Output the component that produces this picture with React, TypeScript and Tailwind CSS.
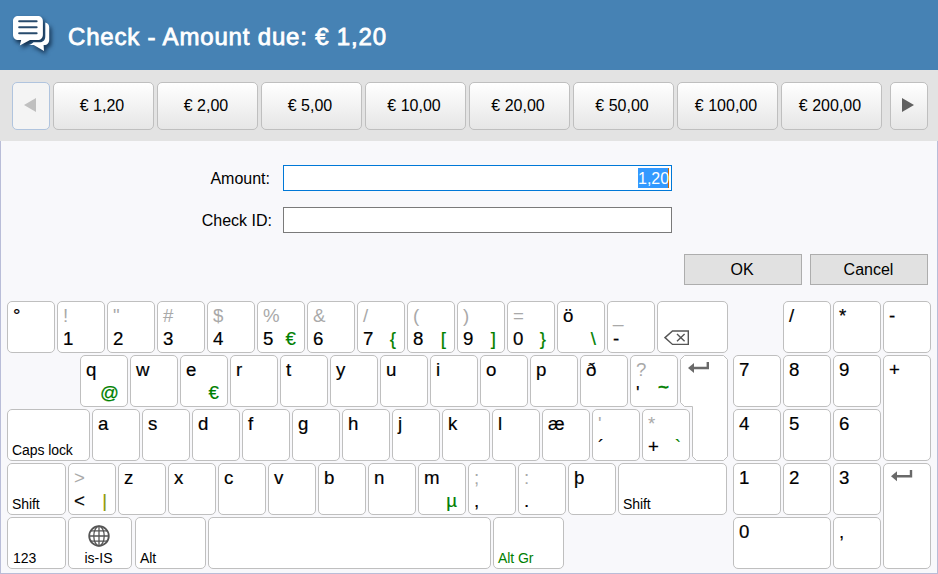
import React from "react";

type KeyProps = {
  top?: string;
  muted?: boolean;
  bottom?: string;
  alt?: string;
  altClass?: string;
  label?: string;
  green?: boolean;
  className?: string;
  children?: React.ReactNode;
};

const keyBase =
  "relative box-border shrink-0 rounded-[5px] border border-[#bfbfbf] bg-white";

function Key({
  top,
  muted,
  bottom,
  alt,
  altClass = "text-[#008000]",
  label,
  green,
  className = "w-12 h-[52px]",
  children,
}: KeyProps) {
  return (
    <div className={`${keyBase} flex flex-col ${className}`}>
      {children}
      {label !== undefined ? (
        <div
          className={`mt-auto pb-[1px] pl-1 text-[14px] leading-4 tracking-[-0.08px] ${green ? "text-[#008000]" : "text-black"}`}
        >
          {label}
        </div>
      ) : (
        <div className="pt-0.5 pl-[5px] pr-2 text-[18.67px] leading-[23px]">
          <div
            className={`h-[23px] ${muted ? "text-[#a9a9a9]" : "text-black [-webkit-text-stroke:0.2px_currentColor]"}`}
          >
            {top}
          </div>
          <div className="flex h-[23px] justify-between [-webkit-text-stroke:0.2px_currentColor]">
            <span>{bottom}</span>
            <span className={altClass}>{alt}</span>
          </div>
        </div>
      )}
    </div>
  );
}

const numberRow: KeyProps[] = [
  { top: "°" },
  { top: "!", muted: true, bottom: "1" },
  { top: '"', muted: true, bottom: "2" },
  { top: "#", muted: true, bottom: "3" },
  { top: "$", muted: true, bottom: "4" },
  { top: "%", muted: true, bottom: "5", alt: "€" },
  { top: "&", muted: true, bottom: "6" },
  { top: "/", muted: true, bottom: "7", alt: "{" },
  { top: "(", muted: true, bottom: "8", alt: "[" },
  { top: ")", muted: true, bottom: "9", alt: "]" },
  { top: "=", muted: true, bottom: "0", alt: "}" },
  { top: "ö", alt: "\\" },
  { top: "_", muted: true, bottom: "-" },
];

const upperRow: KeyProps[] = [
  { top: "q", alt: "@" },
  { top: "w" },
  { top: "e", alt: "€" },
  { top: "r" },
  { top: "t" },
  { top: "y" },
  { top: "u" },
  { top: "i" },
  { top: "o" },
  { top: "p" },
  { top: "ð" },
  { top: "?", muted: true, bottom: "'", alt: "~", altClass: "-mt-[6px] text-[#008000] [-webkit-text-stroke:0.6px_#008000]" },
];

const homeRow: KeyProps[] = [
  { top: "a" },
  { top: "s" },
  { top: "d" },
  { top: "f" },
  { top: "g" },
  { top: "h" },
  { top: "j" },
  { top: "k" },
  { top: "l" },
  { top: "æ" },
  { top: "'", muted: true, bottom: "´" },
  { top: "*", muted: true, bottom: "+", alt: "`" },
];

const lowerRow: KeyProps[] = [
  { top: ">", muted: true, bottom: "<", alt: "|", altClass: "text-[#8a9a00]" },
  { top: "z" },
  { top: "x" },
  { top: "c" },
  { top: "v" },
  { top: "b" },
  { top: "n" },
  { top: "m", alt: "µ" },
  { top: ";", muted: true, bottom: "," },
  { top: ":", muted: true, bottom: "." },
  { top: "þ" },
];

const amounts = ["€ 1,20", "€ 2,00", "€ 5,00", "€ 10,00", "€ 20,00", "€ 50,00", "€ 100,00", "€ 200,00"];

function EnterGlyph() {
  return (
    <svg width="22" height="12" viewBox="0 0 22 12" className="mt-[6px] ml-[7px]">
      <path d="M20 0V6.3H5" fill="none" stroke="#696969" strokeWidth="2.4" />
      <path d="M0 6.3L6 1.3V11.3Z" fill="#696969" />
    </svg>
  );
}

function BackspaceGlyph() {
  return (
    <svg width="26" height="16" viewBox="0 0 26 16" className="mt-[28px] ml-[6px]">
      <path d="M1 7.6L8.5 1H24.3V14.4H8.5Z" fill="none" stroke="#555" strokeWidth="1.4" />
      <path d="M13 3.9L20.6 11.3M20.6 3.9L13 11.3" stroke="#555" strokeWidth="1.4" />
    </svg>
  );
}

function Globe() {
  return (
    <svg width="22" height="22" viewBox="0 0 22 22" fill="none" stroke="#555" strokeWidth="1.3">
      <circle cx="11" cy="11" r="9.8" strokeWidth="1.8" />
      <ellipse cx="11" cy="11" rx="5.2" ry="9.8" />
      <path d="M11 1V21M1 11H21M2.8 5.8H19.2M2.8 16.2H19.2" />
    </svg>
  );
}

function ChatIcon() {
  return (
    <svg width="48" height="46" viewBox="0 0 48 46" className="mt-3 ml-2 shrink-0 drop-shadow-[2px_3px_2px_rgba(5,25,50,0.8)]">
      <path
        d="M37.3 10.5C40 11.2 41.2 12.8 41.2 15.5V27.5C41.2 31 39.5 33 36 33H35.6L36 39L25.8 33H21C23 32.5 24.5 31.5 25.5 30.3H31C35.5 30.3 37.3 28 37.3 24Z"
        fill="#fff"
      />
      <path
        d="M10.5 4H29.5C33 4 34.9 6 34.9 9.2V22.5C34.9 26 33 28 29.5 28H22L11.8 33.5L13.2 28H10.5C7 28 5 26 5 22.5V9.2C5 6 7 4 10.5 4Z"
        fill="#fff"
      />
      <path d="M11.2 9.2H28.6M11.2 15.3H28.6M11.2 21.3H28.6" stroke="#284b6d" strokeWidth="2.1" strokeLinecap="round" />
    </svg>
  );
}

function Keyboard() {
  return (
    <div className="mt-4 flex gap-[5px] pl-1.5">
      <div className="flex w-[721px] flex-col gap-0.5">
        <div className="flex gap-0.5">
          {numberRow.map((k, i) => (
            <Key key={i} {...k} />
          ))}
          <div className={`${keyBase} h-[52px] w-[71px]`}>
            <BackspaceGlyph />
          </div>
        </div>
        <div className="flex">
          <div className="flex w-[683px] shrink-0 flex-col gap-0.5">
            <div className="flex gap-0.5 pl-[73px]">
              {upperRow.map((k, i) => (
                <Key key={i} {...k} />
              ))}
            </div>
            <div className="flex gap-0.5">
              <Key label="Caps lock" className="h-[52px] w-[83px] pb-[1px]" />
              {homeRow.map((k, i) => (
                <Key key={i} {...k} />
              ))}
            </div>
          </div>
          <svg width="48" height="106" viewBox="0 0 48 106" className="-ml-[10px] shrink-0">
            <path
              d="M4.5 .5H43.5L47.5 4.5V101.5L43.5 105.5H16.5L12.5 101.5V51.5H4.5L.5 47.5V4.5Z"
              fill="#fff"
              stroke="#bfbfbf"
              strokeLinejoin="round"
            />
            <path d="M27.8 7V13H13" fill="none" stroke="#696969" strokeWidth="2.4" />
            <path d="M8 13L14 8V18Z" fill="#696969" />
          </svg>
        </div>
        <div className="flex gap-0.5">
          <Key label="Shift" className="h-[52px] w-[59px] pb-[1px]" />
          {lowerRow.map((k, i) => (
            <Key key={i} {...k} />
          ))}
          <Key label="Shift" className="h-[52px] w-[109px] pb-[1px]" />
        </div>
        <div className="flex gap-0.5">
          <Key label="123" className="h-[52px] w-[59px] pb-[1px] pl-px" />
          <div className={`${keyBase} mr-px flex h-[52px] w-16 flex-col items-center`}>
            <div className="mt-[7px] h-[22px] pr-[2px]">
              <Globe />
            </div>
            <div className="mt-[3px] pr-[3px] text-[14px] leading-4">is-IS</div>
          </div>
          <Key label="Alt" className="h-[52px] w-[71px] pb-[1px]" />
          <Key className="h-[52px] w-[283px]" />
          <Key label="Alt Gr" green className="h-[52px] w-[71px] pb-[1px]" />
        </div>
      </div>
      <div className="grid grid-cols-[48px_48px_48px_48px] grid-rows-[52px_52px_52px_52px_52px] gap-0.5">
        <div />
        <Key top="/" />
        <Key top="*" />
        <Key top="-" />
        <Key top="7" />
        <Key top="8" />
        <Key top="9" />
        <Key top="+" className="row-span-2" />
        <Key top="4" />
        <Key top="5" />
        <Key top="6" />
        <Key top="1" />
        <Key top="2" />
        <Key top="3" />
        <div className={`${keyBase} row-span-2`}>
          <EnterGlyph />
        </div>
        <Key top="0" className="col-span-2" />
        <Key top="," />
      </div>
    </div>
  );
}

export default function App() {
  const toolButton =
    "box-border flex h-12 shrink-0 items-center justify-center rounded-[5px] border";
  return (
    <div className="flex h-[574px] w-[938px] flex-col overflow-hidden bg-[#f8f8fb] font-['Liberation_Sans',Arial,sans-serif] text-black">
      <header className="flex h-[70px] shrink-0 bg-[#4682b4]">
        <ChatIcon />
        <h1 className="mt-[23px] ml-3 text-[24px] leading-7 tracking-[0.82px] whitespace-nowrap text-white [-webkit-text-stroke:0.8px_white]">
          Check - Amount due: € 1,20
        </h1>
      </header>
      <div className="flex h-[71px] shrink-0 gap-[3px] bg-[#e3e3e3] pt-3 pl-3">
        <div className={`${toolButton} w-[38px] border-[#b0c4de] bg-[#f4f4f4]`}>
          <svg width="12" height="14" viewBox="0 0 12 14" className="mr-[2px] mb-[2px]">
            <path d="M0 7L12 0V14Z" fill="#c0c0c0" />
          </svg>
        </div>
        {amounts.map((a) => (
          <div
            key={a}
            className={`${toolButton} w-[101px] border-[#bfbfbf] bg-linear-to-b from-white to-[#e6e6e6] pr-[3px] text-base`}
          >
            {a}
          </div>
        ))}
        <div className={`${toolButton} ml-[5px] w-[38px] border-[#bfbfbf] bg-linear-to-b from-white to-[#e6e6e6]`}>
          <svg width="12" height="14" viewBox="0 0 12 14" className="mr-[2px] mb-[2px]">
            <path d="M12 7L0 0V14Z" fill="#606060" />
          </svg>
        </div>
      </div>
      <main className="box-border flex h-[433px] flex-col border-x border-b border-[#b9bdd8] pt-6">
        <div className="flex h-[26px]">
          <label className="w-[282px] pr-[13px] text-right text-base leading-7">Amount:</label>
          <div className="box-border flex w-[389px] justify-end border border-[#0078d7] bg-white pt-[2px] pr-[2px]">
            <span className="box-border h-5 w-[31px] border-r border-[#cc6600] bg-[#3399ff] text-base leading-[22px] text-white">1,20</span>
          </div>
        </div>
        <div className="mt-4 flex h-[26px]">
          <label className="w-[282px] pr-[11px] text-right text-base leading-7">Check ID:</label>
          <div className="box-border w-[389px] border border-[#7a7a7a] bg-white" />
        </div>
        <div className="mt-[21px] flex h-[31px] justify-end gap-2 pr-[9px] text-base">
          <button className="box-border w-[118px] border border-[#adadad] bg-[#e1e1e1] pr-[2px]">OK</button>
          <button className="box-border w-[118px] border border-[#adadad] bg-[#e1e1e1] pr-px">Cancel</button>
        </div>
        <Keyboard />
      </main>
    </div>
  );
}
